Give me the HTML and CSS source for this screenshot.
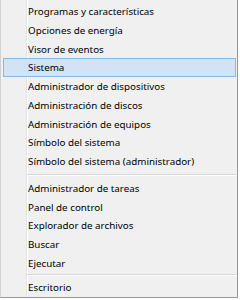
FILE: index.html
```html
<!DOCTYPE html>
<html lang="es">
<head>
<meta charset="utf-8">
<link rel="stylesheet" href="styles.css">
</head>
<body>
<div class="menu">
  <ul class="group">
    <li class="item">Programas y características</li>
    <li class="item">Opciones de energía</li>
    <li class="item">Visor de eventos</li>
    <li class="item active">Sistema</li>
    <li class="item">Administrador de dispositivos</li>
    <li class="item">Administración de discos</li>
    <li class="item">Administración de equipos</li>
    <li class="item">Símbolo del sistema</li>
    <li class="item">Símbolo del sistema (administrador)</li>
  </ul>
  <div class="sep"></div>
  <ul class="group">
    <li class="item">Administrador de tareas</li>
    <li class="item">Panel de control</li>
    <li class="item">Explorador de archivos</li>
    <li class="item">Buscar</li>
    <li class="item">Ejecutar</li>
  </ul>
  <div class="sep sep-last"></div>
  <ul class="group">
    <li class="item">Escritorio</li>
  </ul>
</div>
</body>
</html>
```
FILE: styles.css
```css
html, body {
  margin: 0;
  padding: 0;
  background: #ffffff;
}
.menu {
  box-sizing: border-box;
  width: 238px;
  height: 298px;
  padding-top: 2px;
  background-color: #f0f0f0;
  background-image: linear-gradient(to right, transparent 25px, #e3e3e3 25px, #e3e3e3 26px, #ffffff 26px, #ffffff 27px, transparent 27px);
  border-left: 1px solid #d0d0d0;
  border-right: 1px solid #979797;
  border-bottom: 1px solid #979797;
  font-family: "Noto Sans", "Open Sans", sans-serif;
  font-size: 9.8px;
  color: #000;
}
.group {
  list-style: none;
  margin: 0;
  padding: 0;
}
.item {
  box-sizing: border-box;
  height: 18.75px;
  line-height: 17.5px;
  padding-left: 24px;
  margin: 0 1px 0 2px;
  border: 1px solid transparent;
  white-space: nowrap;
}
.item.active {
  background: #d1e3f5;
  border-color: #8ab8ea;
}
.sep {
  height: 1px;
  margin: 3px 1px 3px 26px;
  border-top: 1px solid #d7d7d7;
  background: #ffffff;
}
.sep-last {
  margin-top: 1px;
  margin-bottom: 2px;
}
```
